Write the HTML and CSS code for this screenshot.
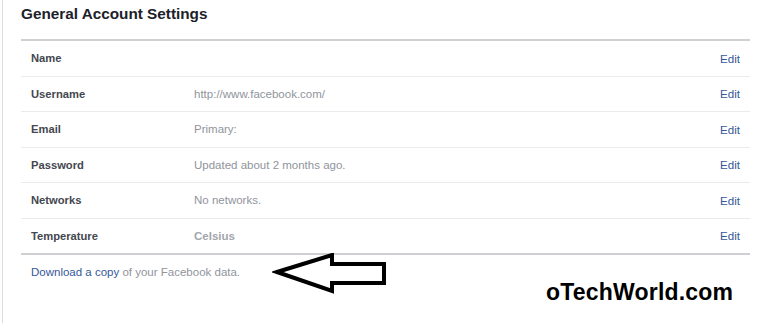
FILE: index.html
```html
<!DOCTYPE html>
<html>
<head>
<meta charset="utf-8">
<link rel="stylesheet" href="styles.css">
</head>
<body>
<div class="page">
  <div class="settings">
    <h2 class="title">General Account Settings</h2>
    <div class="table">
      <div class="row"><span class="label">Name</span><span class="value"></span><a class="edit">Edit</a></div>
      <div class="row"><span class="label">Username</span><span class="value">http://www.facebook.com/</span><a class="edit">Edit</a></div>
      <div class="row"><span class="label">Email</span><span class="value">Primary:</span><a class="edit">Edit</a></div>
      <div class="row"><span class="label">Password</span><span class="value">Updated about 2 months ago.</span><a class="edit">Edit</a></div>
      <div class="row"><span class="label">Networks</span><span class="value">No networks.</span><a class="edit">Edit</a></div>
      <div class="row last"><span class="label">Temperature</span><span class="value strong">Celsius</span><a class="edit">Edit</a></div>
    </div>
    <div class="footer"><a class="link">Download a copy</a> of your Facebook data.</div>
  </div>
  <svg class="arrow" width="120" height="44" viewBox="0 0 120 44">
    <polygon points="5,19 60,2 60,11 112,11 112,30 60,30 60,38" fill="none" stroke="#000" stroke-width="4" stroke-linejoin="miter"/>
  </svg>
  <div class="brand">oTechWorld.com</div>
</div>
</body>
</html>
```
FILE: styles.css
```css
html, body {
  margin: 0;
  padding: 0;
  background: #fff;
}
body {
  width: 768px;
  height: 323px;
  overflow: hidden;
  font-family: "Liberation Sans", Arial, sans-serif;
}
.page {
  position: relative;
  margin-left: 2px;
  height: 323px;
  border-left: 1px solid #dcdde0;
}
.settings {
  margin-left: 18px;
  width: 729px;
}
.title {
  margin: 0;
  padding-top: 5px;
  box-sizing: border-box;
  height: 41px;
  font-size: 15.3px;
  line-height: 18px;
  font-weight: bold;
  color: #1d2129;
  border-bottom: 2px solid #cfd0d3;
}
.row {
  display: flex;
  align-items: center;
  height: 35.5px;
  box-sizing: border-box;
  border-bottom: 1px solid #e9ebee;
  padding: 0 10px;
  font-size: 11.5px;
}
.row.last {
  border-bottom: 2px solid #cfd0d3;
  height: 36.5px;
}
.label {
  width: 163px;
  flex: none;
  font-weight: bold;
  color: #43474e;
  font-size: 11.2px;
}
.value {
  flex: 1;
  color: #90949c;
}
.value.strong {
  font-weight: bold;
  color: #a3a6ac;
}
.edit {
  color: #365899;
  font-size: 11.6px;
}
.footer {
  padding: 10px 10px 0;
  font-size: 11.5px;
  line-height: 14px;
  color: #90949c;
}
.link {
  color: #365899;
}
.arrow {
  position: absolute;
  left: 269px;
  top: 253px;
}
.brand {
  position: absolute;
  left: 543px;
  top: 279px;
  font-size: 23px;
  font-weight: bold;
  color: #000;
  letter-spacing: 0.2px;
}
```
